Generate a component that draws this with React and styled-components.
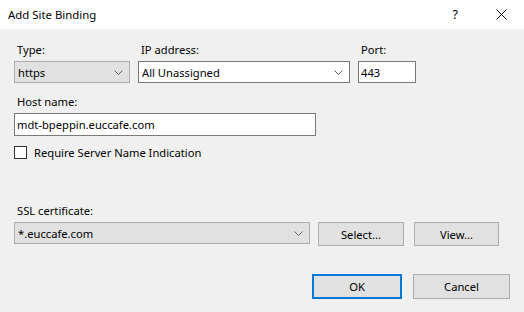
import styled, { createGlobalStyle } from 'styled-components';

const GlobalStyle = createGlobalStyle`
  html, body {
    margin: 0;
    padding: 0;
    background: #f0f0f0;
  }
  * {
    box-sizing: border-box;
  }
`;

const Chevron = () => (
  <svg width="9" height="5" viewBox="0 0 9 5">
    <path d="M0.5 0.5 L4.5 4.5 L8.5 0.5" fill="none" stroke="#606060" strokeWidth="1" />
  </svg>
);

const App = () => {
  return (
    <>
      <GlobalStyle />
      <Dialog>
        <TitleBar>
          <Title>Add Site Binding</Title>
          <TitleButtons>
            <Help>?</Help>
            <svg width="11" height="11" viewBox="0 0 11 11">
              <path d="M0.5 0.5 L10.5 10.5 M10.5 0.5 L0.5 10.5" stroke="#000" strokeWidth="1" />
            </svg>
          </TitleButtons>
        </TitleBar>

        <Body>
          <Row>
            <Field width={116}>
              <Label>Type:</Label>
              <Combo readOnly>
                <span>https</span>
                <Chevron />
              </Combo>
            </Field>
            <Field width={212}>
              <Label>IP address:</Label>
              <Combo>
                <span>All Unassigned</span>
                <Chevron />
              </Combo>
            </Field>
            <Field width={58}>
              <Label>Port:</Label>
              <TextBox>443</TextBox>
            </Field>
          </Row>

          <HostField width={302}>
            <Label>Host name:</Label>
            <TextBox tall>mdt-bpeppin.euccafe.com</TextBox>
          </HostField>

          <CheckRow>
            <CheckBox />
            <span>Require Server Name Indication</span>
          </CheckRow>

          <SslBlock>
            <Label>SSL certificate:</Label>
            <SslRow>
              <Combo readOnly width={296}>
                <span>*.euccafe.com</span>
                <Chevron />
              </Combo>
              <Button width={86}>Select...</Button>
              <Button width={85}>View...</Button>
            </SslRow>
          </SslBlock>

          <Footer>
            <Button width={90} tall primary>OK</Button>
            <Button width={97} tall>Cancel</Button>
          </Footer>
        </Body>
      </Dialog>
    </>
  );
};

const Dialog = styled.div`
  width: 524px;
  height: 312px;
  background: #f0f0f0;
  font-family: 'Noto Sans', 'Open Sans', sans-serif;
  font-size: 11.2px;
  color: #000;
  display: flex;
  flex-direction: column;
`;

const TitleBar = styled.div`
  height: 29px;
  background: #fff;
  display: flex;
  align-items: center;
  justify-content: space-between;
  padding: 0 17px 0 8px;
`;

const Title = styled.div`
  font-size: 11.4px;
`;

const TitleButtons = styled.div`
  display: flex;
  align-items: center;
  gap: 38px;
`;

const Help = styled.span`
  font-size: 12.5px;
`;

const Body = styled.div`
  display: flex;
  flex-direction: column;
  padding: 13px 14px 0 14px;
`;

const Row = styled.div`
  display: flex;
  gap: 8px;
`;

const Field = styled.div`
  width: ${({ width }) => width}px;
  display: flex;
  flex-direction: column;
  gap: 3px;
`;

const HostField = styled(Field)`
  margin-top: 11px;
`;

const Label = styled.div`
  line-height: 16px;
  padding-left: 3px;
`;

const Combo = styled.div`
  height: 22px;
  width: ${({ width }) => (width ? `${width}px` : 'auto')};
  border: 1px solid ${({ readOnly }) => (readOnly ? '#adadad' : '#7a7a7a')};
  background: ${({ readOnly }) => (readOnly ? '#e1e1e1' : '#fff')};
  display: flex;
  align-items: center;
  justify-content: space-between;
  padding: 0 6px 0 3px;
`;

const TextBox = styled.div`
  height: ${({ tall }) => (tall ? 23 : 22)}px;
  border: 1px solid #7a7a7a;
  background: #fff;
  display: flex;
  align-items: center;
  padding: 0 2px;
`;

const CheckRow = styled.div`
  margin-top: 10px;
  display: flex;
  align-items: center;
  gap: 7px;
  height: 13px;
`;

const CheckBox = styled.div`
  width: 13px;
  height: 13px;
  border: 1px solid #333;
  background: #fff;
`;

const SslBlock = styled.div`
  margin-top: 44px;
  display: flex;
  flex-direction: column;
  gap: 3px;
`;

const SslRow = styled.div`
  display: flex;
  align-items: flex-start;
  gap: 8px;
  & > button:last-child {
    margin-left: 2px;
  }
`;

const Button = styled.button`
  width: ${({ width }) => width}px;
  height: ${({ tall }) => (tall ? 25 : 24)}px;
  background: #e1e1e1;
  border: ${({ primary }) => (primary ? '2px solid #0078d7' : '1px solid #adadad')};
  font-family: inherit;
  font-size: 11.2px;
  color: #000;
  padding: 0;
`;

const Footer = styled.div`
  margin-top: 28px;
  display: flex;
  justify-content: flex-end;
  gap: 11px;
`;

export default App;
